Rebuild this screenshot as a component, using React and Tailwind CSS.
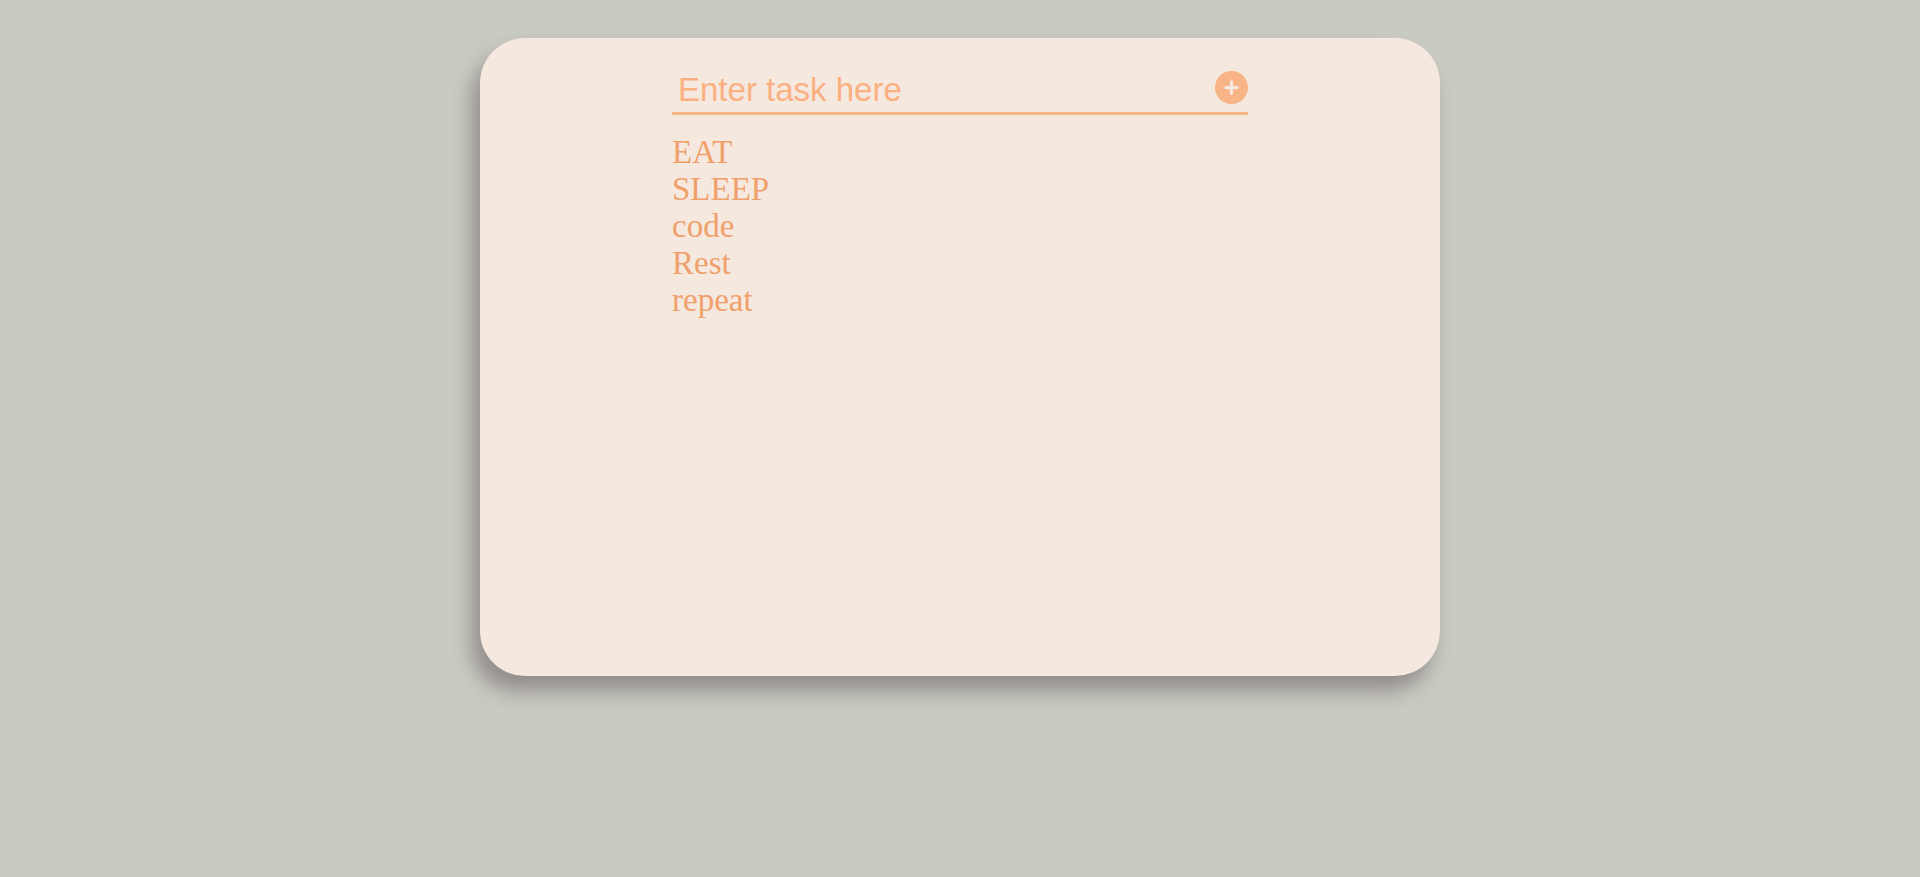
import { useState } from "react";

export default function App() {
  const [tasks, setTasks] = useState(["EAT", "SLEEP", "code", "Rest", "repeat"]);
  const [text, setText] = useState("");

  const addTask = (event) => {
    event.preventDefault();
    const value = text.trim();
    if (!value) return;
    setTasks([...tasks, value]);
    setText("");
  };

  return (
    <div className="flex min-h-screen items-start justify-center bg-[#c9cac2] pt-[38px]">
      <main className="flex min-h-[638px] w-1/2 flex-col items-center rounded-[45px] bg-[#f5e8df] pt-8 pb-8 shadow-[-8px_15px_20px_0px_#938e8b]">
        <form
          onSubmit={addTask}
          className="flex w-3/5 items-center border-b-[3px] border-[#f8b486] pb-1"
        >
          <input
            type="text"
            aria-label="Task"
            placeholder="Enter task here"
            value={text}
            onChange={(event) => setText(event.target.value)}
            className="h-[38px] min-w-0 flex-1 bg-transparent px-1.5 pt-0.5 font-['Liberation_Sans',Arial,sans-serif] text-[33px] text-[#f4a26c] outline-none placeholder:text-[#fbb081]"
          />
          <button
            type="submit"
            aria-label="Add task"
            className="mb-1 size-[33px] shrink-0 cursor-pointer rounded-full bg-[#f8b486]"
          >
            <svg viewBox="0 0 33 33" className="size-full" aria-hidden="true">
              <path
                d="M16.5 10.9v11.4M10.8 16.6h11.4"
                stroke="#f5e8df"
                strokeWidth="3.2"
                strokeLinecap="round"
              />
            </svg>
          </button>
        </form>
        <ul className="mt-[19px] w-3/5 font-['Liberation_Serif','Times_New_Roman',serif] text-[33px] leading-[37px] text-[#f0a06a]">
          {tasks.map((task, index) => (
            <li key={index}>{task}</li>
          ))}
        </ul>
      </main>
    </div>
  );
}
